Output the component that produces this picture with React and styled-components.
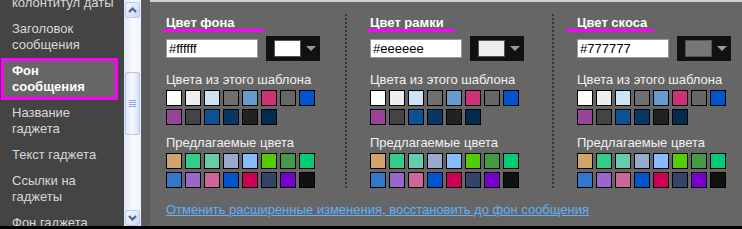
import { useLayoutEffect, useRef } from "react";
import styled, { createGlobalStyle } from "styled-components";

const GlobalStyle = createGlobalStyle`
  html, body {
    margin: 0;
    padding: 0;
    background: #000;
  }
  body {
    font-family: "Liberation Sans", Arial, sans-serif;
    font-size: 13px;
  }
`;

const Layout = styled.div`
  display: flex;
  width: 742px;
  height: 226px;
  overflow: hidden;
  background: #5a5a5a;
`;

const Sidebar = styled.div`
  width: 124px;
  flex-shrink: 0;
  background: #444;
  overflow: hidden;
`;

const NavList = styled.ul`
  list-style: none;
  margin: 0;
  padding: 0 0 0 1px;
`;

const NavItem = styled.li`
  width: 117px;
  box-sizing: border-box;
  padding: 5px 4px 5px 11px;
  line-height: 16px;
  color: ${(p) => (p.$active ? "#fff" : "#d8d8d8")};
  font-weight: ${(p) => (p.$active ? "bold" : "normal")};
  background: ${(p) => (p.$active ? "#666" : "transparent")};
  box-shadow: ${(p) => (p.$active ? "inset 0 0 0 3px #ff00ff" : "none")};
`;

const ScrollTrack = styled.div`
  width: 17px;
  flex-shrink: 0;
  box-sizing: border-box;
  padding-top: 2px;
  display: flex;
  flex-direction: column;
  background: linear-gradient(to right, #e2e9f8, #f9fbff 55%, #eef3fd);
`;

const ScrollButton = styled.div`
  width: 15px;
  height: 16px;
  margin-left: 1px;
  box-sizing: border-box;
  border: 1px solid #b9c9ef;
  border-radius: 2px;
  background: linear-gradient(135deg, #f3f7ff, #c9d8f7);
  display: flex;
  align-items: center;
  justify-content: center;
  flex-shrink: 0;
`;

const ScrollThumb = styled.div`
  width: 15px;
  height: 63px;
  margin: 54px 0 0 1px;
  box-sizing: border-box;
  border: 1px solid #b4c5ec;
  border-radius: 2px;
  background: linear-gradient(to right, #dfe8fb, #f6f9ff 50%, #d3e0f9);
  display: flex;
  flex-direction: column;
  align-items: center;
  justify-content: center;
  gap: 1px;
  flex-shrink: 0;
`;

const Grip = styled.span`
  display: block;
  width: 7px;
  height: 1px;
  background: #8ea3cf;
`;

const TrackFill = styled.div`
  flex: 1;
`;

const Panel = styled.div`
  flex: 1;
  margin-left: 9px;
  background: #666;
  border-top: 2px solid #d2d2d2;
  padding: 12px 0 0 16px;
  color: #f2f2f2;
`;

const Columns = styled.div`
  display: flex;
`;

const Column = styled.div`
  width: ${(p) => p.$width}px;
  box-sizing: border-box;
  padding: 0 0 2px ${(p) => (p.$divider ? 25 : 0)}px;
  background: ${(p) =>
    p.$divider
      ? "repeating-linear-gradient(to bottom, #363636 0 2px, transparent 2px 4px) left top / 2px 100% no-repeat"
      : "none"};
`;

const Title = styled.div`
  position: relative;
  margin-top: 1px;
  line-height: 16px;
  font-weight: bold;
  color: #fff;
  &::after {
    content: "";
    position: absolute;
    left: ${(p) => p.$ulLeft}px;
    top: 14px;
    width: ${(p) => p.$ulWidth}px;
    height: 3px;
    border-radius: 2px;
    background: #ff00ff;
  }
`;

const InputRow = styled.div`
  display: flex;
  align-items: center;
  gap: 8px;
  margin-top: 5px;
`;

const HexInput = styled.input`
  width: 92px;
  height: 19px;
  box-sizing: border-box;
  border: 1px solid #9a9a9a;
  padding: 0 2px;
  margin: 0;
  font-family: "Liberation Sans", Arial, sans-serif;
  font-size: 13px;
  color: #000;
  background: #fff;
  outline: none;
`;

const Picker = styled.div`
  width: 54px;
  height: 25px;
  box-sizing: border-box;
  padding-left: 8px;
  background: #111;
  display: flex;
  align-items: center;
`;

const PickerSwatch = styled.div`
  width: 27px;
  height: 17px;
  box-sizing: border-box;
  border: 1px solid #555;
  background: ${(p) => p.$color};
`;

const PickerArrow = styled.span`
  margin-left: 5px;
  width: 0;
  height: 0;
  border-left: 5px solid transparent;
  border-right: 5px solid transparent;
  border-top: 5px solid #9a9a9a;
`;

const Label = styled.div`
  margin-top: ${(p) => p.$gap}px;
  line-height: 16px;
`;

const SwatchGrid = styled.div`
  display: grid;
  grid-template-columns: repeat(8, 16px);
  grid-auto-rows: 16px;
  gap: 3px;
  margin-top: 2px;
`;

const Chip = styled.div`
  box-sizing: border-box;
  border: 1px solid #000;
  background: ${(p) => p.$color};
`;

const ResetLink = styled.a`
  display: inline-block;
  margin-top: 12px;
  line-height: 16px;
  color: #62b0f5;
  text-decoration: underline;
  cursor: pointer;
`;

const templateColors = [
  "#ffffff", "#eeeeee", "#cfe2f3", "#6f6f6f", "#6699cc", "#cc3377", "#666666", "#0055cc",
  "#994499", "#444444", "#0b5394", "#073763", "#222222", "#052a4d",
];

const suggestedColors = [
  "#d0a46a", "#33cc88", "#66ccaa", "#99aacc", "#88bbff", "#55cc00", "#449944", "#00cc77",
  "#3377cc", "#9966cc", "#cc6699", "#0055cc", "#cc0055", "#334466", "#7700cc", "#111111",
];

const navItems = [
  "Текст колонтитул даты",
  "Заголовок сообщения",
  "Фон сообщения",
  "Название гаджета",
  "Текст гаджета",
  "Ссылки на гаджеты",
  "Фон гаджета",
  "Граница гаджета",
];

const groups = [
  { title: "Цвет фона", value: "#ffffff", width: 179, ulLeft: -3, ulWidth: 102 },
  { title: "Цвет рамки", value: "#eeeeee", width: 207, divider: true, ulLeft: -3, ulWidth: 88 },
  { title: "Цвет скоса", value: "#777777", width: 180, divider: true, ulLeft: -11, ulWidth: 88 },
];

function Chevron({ up }) {
  return (
    <svg width="9" height="6" viewBox="0 0 9 6">
      <path
        d={up ? "M1 5 L4.5 1.5 L8 5" : "M1 1 L4.5 4.5 L8 1"}
        fill="none"
        stroke="#4d6185"
        strokeWidth="2"
      />
    </svg>
  );
}

function ColorGroup({ group }) {
  return (
    <Column $width={group.width} $divider={group.divider}>
      <Title $ulLeft={group.ulLeft} $ulWidth={group.ulWidth}>
        {group.title}
      </Title>
      <InputRow>
        <HexInput readOnly value={group.value} />
        <Picker>
          <PickerSwatch $color={group.value} />
          <PickerArrow />
        </Picker>
      </InputRow>
      <Label $gap={11}>Цвета из этого шаблона</Label>
      <SwatchGrid>
        {templateColors.map((c, i) => (
          <Chip key={i} $color={c} />
        ))}
      </SwatchGrid>
      <Label $gap={10}>Предлагаемые цвета</Label>
      <SwatchGrid>
        {suggestedColors.map((c, i) => (
          <Chip key={i} $color={c} />
        ))}
      </SwatchGrid>
    </Column>
  );
}

export default function App() {
  const sideRef = useRef(null);

  useLayoutEffect(() => {
    // list is scrolled down a bit, like in the shot
    if (sideRef.current) sideRef.current.scrollTop = 26;
  }, []);

  return (
    <>
      <GlobalStyle />
      <Layout>
        <Sidebar ref={sideRef}>
          <NavList>
            {navItems.map((item) => (
              <NavItem key={item} $active={item === "Фон сообщения"}>
                {item}
              </NavItem>
            ))}
          </NavList>
        </Sidebar>
        <ScrollTrack>
          <ScrollButton>
            <Chevron up />
          </ScrollButton>
          <ScrollThumb>
            <Grip />
            <Grip />
            <Grip />
            <Grip />
          </ScrollThumb>
          <TrackFill />
          <ScrollButton>
            <Chevron />
          </ScrollButton>
        </ScrollTrack>
        <Panel>
          <Columns>
            {groups.map((g) => (
              <ColorGroup key={g.title} group={g} />
            ))}
          </Columns>
          <ResetLink>
            Отменить расширенные изменения, восстановить до фон сообщения
          </ResetLink>
        </Panel>
      </Layout>
    </>
  );
}
